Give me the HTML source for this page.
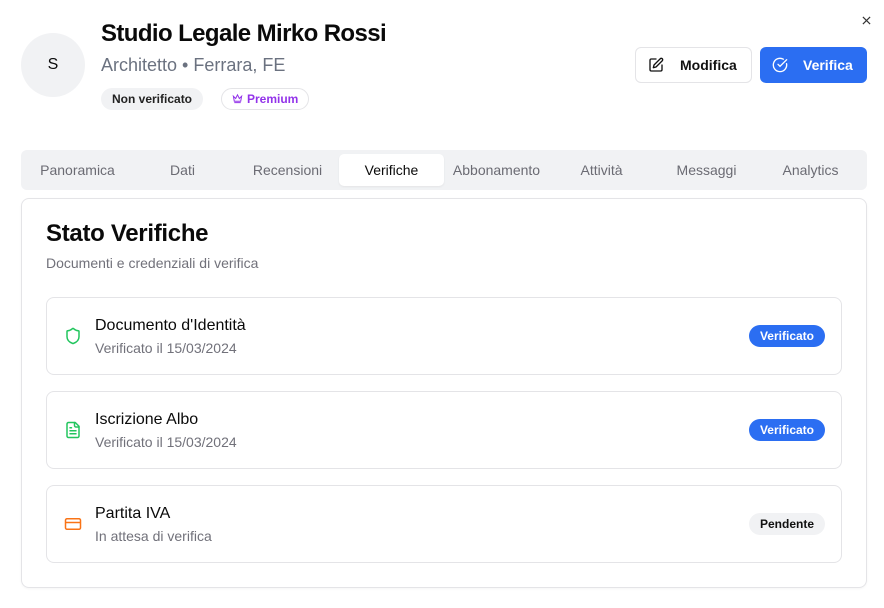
<!DOCTYPE html>
<html><head><meta charset="utf-8"><style>
*{box-sizing:border-box;margin:0;padding:0}
body{width:884px;height:608px;background:#fff;font-family:"Liberation Sans",sans-serif;color:#0a0a0a;position:relative;overflow:hidden}
.a{position:absolute}
.tab{position:absolute;top:150px;height:40px;width:105px;text-align:center;line-height:40px;font-size:14px;color:#6b6b73}
.item{position:absolute;left:46px;width:796px;height:78px;border:1px solid #e4e4e7;border-radius:8px}
.item .t{position:absolute;left:48px;top:19px;font-size:16px;color:#0a0a0a}
.item .s{position:absolute;left:48px;top:42px;font-size:14px;color:#71717a}
.item svg{position:absolute;left:17px;top:29px}
.badge{position:absolute;right:16px;top:27px;height:22px;border-radius:11px;font-size:12px;font-weight:bold;line-height:22px;padding:0 11px}
</style></head><body>
<svg class="a" style="left:862px;top:16px" width="9" height="9" viewBox="0 0 10 10"><path d="M1 1L9 9M9 1L1 9" stroke="#333" stroke-width="1.3"/></svg>
<div class="a" style="left:21px;top:33px;width:64px;height:64px;border-radius:50%;background:#f1f2f4;text-align:center;line-height:64px;font-size:16px">S</div>
<div class="a" style="left:101px;top:20px;font-size:24px;font-weight:bold;letter-spacing:-0.6px">Studio Legale Mirko Rossi</div>
<div class="a" style="left:101px;top:55px;font-size:18px;color:#6b7280">Architetto • Ferrara, FE</div>
<div class="a" style="left:101px;top:88px;height:22px;padding:0 11px;border-radius:11px;background:#f1f2f4;font-size:12px;font-weight:bold;line-height:22px;color:#222">Non verificato</div>
<div class="a" style="left:221px;top:88px;height:22px;padding:0 10px;border-radius:11px;border:1px solid #e4e4e7;font-size:12px;font-weight:bold;line-height:20px;color:#9333ea"><svg width="11" height="11" viewBox="0 0 12 12" style="vertical-align:-1px;margin-right:4px"><path d="M1.5 3.5L4 6L6 2L8 6L10.5 3.5L9.5 9H2.5Z M2.5 10.5H9.5" fill="none" stroke="#9333ea" stroke-width="1.1"/></svg>Premium</div>
<div class="a" style="left:635px;top:47px;width:117px;height:36px;border:1px solid #e4e4e7;border-radius:6px;font-size:14px;font-weight:bold;line-height:34px;padding-left:44px;color:#111">Modifica</div>
<svg class="a" style="left:648px;top:57px" width="16" height="16" viewBox="0 0 24 24" fill="none" stroke="#111" stroke-width="2" stroke-linecap="round" stroke-linejoin="round"><path d="M12 3H5a2 2 0 0 0-2 2v14a2 2 0 0 0 2 2h14a2 2 0 0 0 2-2v-7"/><path d="M18.4 2.6a2.1 2.1 0 0 1 3 3L12 15l-4 1 1-4Z"/></svg>
<div class="a" style="left:760px;top:47px;width:107px;height:36px;background:#2b6ef2;border-radius:6px;font-size:14px;font-weight:bold;line-height:36px;padding-left:43px;color:#fff">Verifica</div>
<svg class="a" style="left:772px;top:57px" width="16" height="16" viewBox="0 0 24 24" fill="none" stroke="#fff" stroke-width="2" stroke-linecap="round"><path d="M21.8 10A10 10 0 1 1 17 3.3"/><path d="M9 11l3 3L22 4"/></svg>
<div class="a" style="left:21px;top:150px;width:846px;height:40px;background:#f1f2f4;border-radius:6px"></div>
<div class="a" style="left:339px;top:154px;width:105px;height:32px;background:#fff;border-radius:5px;box-shadow:0 1px 2px rgba(0,0,0,.06)"></div>
<div class="tab" style="left:25px">Panoramica</div>
<div class="tab" style="left:130px">Dati</div>
<div class="tab" style="left:235px">Recensioni</div>
<div class="tab" style="left:339px;color:#0a0a0a">Verifiche</div>
<div class="tab" style="left:444px">Abbonamento</div>
<div class="tab" style="left:549px">Attività</div>
<div class="tab" style="left:654px">Messaggi</div>
<div class="tab" style="left:758px">Analytics</div>
<div class="a" style="left:21px;top:198px;width:846px;height:390px;border:1px solid #e4e4e7;border-radius:8px;box-shadow:0 1px 2px rgba(0,0,0,.04)"></div>
<div class="a" style="left:46px;top:220px;font-size:24px;font-weight:bold;letter-spacing:-0.3px">Stato Verifiche</div>
<div class="a" style="left:46px;top:255px;font-size:14px;color:#71717a">Documenti e credenziali di verifica</div>
<div class="item" style="top:297px">
<svg width="18" height="18" viewBox="0 0 24 24" fill="none" stroke="#22c55e" stroke-width="2" stroke-linejoin="round"><path d="M20 13c0 5-3.5 7.5-7.7 9a1 1 0 0 1-.6 0C7.5 20.5 4 18 4 13V6a1 1 0 0 1 1-1c2 0 4.5-1.2 6.2-2.7a1.2 1.2 0 0 1 1.6 0C14.5 3.8 17 5 19 5a1 1 0 0 1 1 1z"/></svg>
<div class="t">Documento d'Identità</div><div class="s">Verificato il 15/03/2024</div>
<div class="badge" style="background:#2b6ef2;color:#fff">Verificato</div></div>
<div class="item" style="top:391px">
<svg width="18" height="18" viewBox="0 0 24 24" fill="none" stroke="#22c55e" stroke-width="2" stroke-linejoin="round" stroke-linecap="round"><path d="M15 2H6a2 2 0 0 0-2 2v16a2 2 0 0 0 2 2h12a2 2 0 0 0 2-2V7Z"/><path d="M14 2v4a2 2 0 0 0 2 2h4M10 9H8M16 13H8M16 17H8"/></svg>
<div class="t">Iscrizione Albo</div><div class="s">Verificato il 15/03/2024</div>
<div class="badge" style="background:#2b6ef2;color:#fff">Verificato</div></div>
<div class="item" style="top:485px">
<svg width="18" height="18" viewBox="0 0 24 24" fill="none" stroke="#f97316" stroke-width="2"><rect x="2" y="5" width="20" height="14" rx="2"/><path d="M2 10h20"/></svg>
<div class="t">Partita IVA</div><div class="s">In attesa di verifica</div>
<div class="badge" style="background:#f1f2f4;color:#111">Pendente</div></div>
</body></html>
